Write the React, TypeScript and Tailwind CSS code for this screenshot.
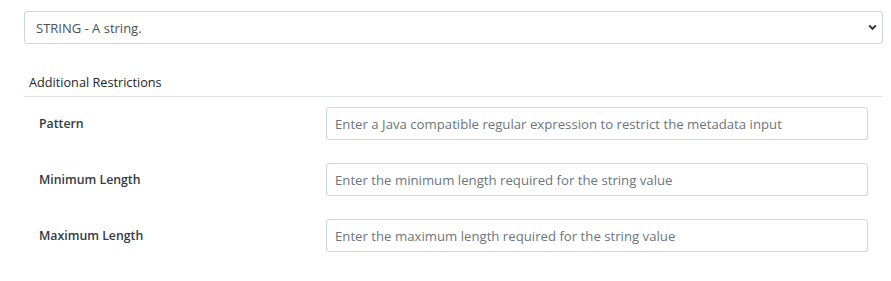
import React from "react"

const rows = [
    { label: "Pattern", placeholder: "Enter a Java compatible regular expression to restrict the metadata input" },
    { label: "Minimum Length", placeholder: "Enter the minimum length required for the string value" },
    { label: "Maximum Length", placeholder: "Enter the maximum length required for the string value" },
]

export default function App() {
    return (
        <div
            className="w-[891px] h-[281px] bg-white text-[#212529]"
            style={{ fontFamily: '"Open Sans", "Noto Sans", sans-serif' }}
        >
            <div className="pt-[11px] pl-[24px] w-[883px]">
                {/* type select */}
                <div className="relative h-[33px] border border-[#ced4da] rounded-[3px] flex items-center pl-[11px] text-[13px] leading-[18px] text-[#495057]">
                    STRING - A string.
                    <svg className="absolute right-[5px] top-[12px]" width="9" height="7" viewBox="0 0 9 7">
                        <path d="M1.2 1.5 L4.5 4.8 L7.8 1.5" fill="none" stroke="#343a40" strokeWidth="2" />
                    </svg>
                </div>

                {/* restrictions */}
                <div className="mt-[29px] pl-[5px] pb-[5px] border-b border-[#dee2e6] text-[12.7px] leading-[18px] font-medium">
                    Additional Restrictions
                </div>

                <div className="flex flex-col gap-[23px] mt-[10px] w-[844px]">
                    {rows.map((r) => (
                        <div key={r.label} className="flex items-center">
                            <div className="w-[302px] pl-[15px] text-[12.3px] leading-[18px] font-semibold text-[#343a40]">{r.label}</div>
                            <div className="flex-1 h-[33px] border border-[#ced4da] rounded-[3px] flex items-center pl-[8px] text-[13.2px] leading-[18px] text-[#6c757d]">
                                {r.placeholder}
                            </div>
                        </div>
                    ))}
                </div>
            </div>
        </div>
    )
}
